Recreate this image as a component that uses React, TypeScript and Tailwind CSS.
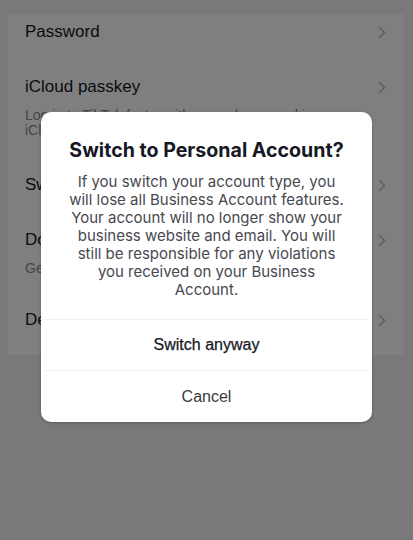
const rows = [
  { title: "Password", top: "mt-[14px]" },
  {
    title: "iCloud passkey",
    top: "mt-[19px]",
    sub: "Log in to TikTok faster with a passkey saved in your iCloud Keychain.",
  },
  { title: "Switch to Personal Account", top: "mt-[29px]" },
  { title: "Download your data", top: "mt-[19px]", sub: "Get a copy of your TikTok data" },
  { title: "Deactivate or delete account", top: "mt-[26px]" },
];

const Chevron = () => (
  <svg width="8" height="13" viewBox="0 0 8 13" fill="none" className="shrink-0">
    <path d="M1.5 1.5L6.5 6.5L1.5 11.5" stroke="#b4b4b4" strokeWidth="1.4" strokeLinecap="round" strokeLinejoin="round" />
  </svg>
);

export default function App() {
  return (
    <div
      className="relative w-[413px] h-[540px] overflow-hidden bg-[#f3f3f3]"
      style={{ fontFamily: '"Liberation Sans", Arial, sans-serif' }}
    >
      {/* Settings list behind the dialog */}
      <div className="mx-[8px] w-[396px] bg-white pb-[17px]">
        {rows.map((r) => (
          <div key={r.title} className={`${r.top} pl-[17px] pr-[18px]`}>
            <div className="flex h-[36px] items-center justify-between">
              <span className="text-[17px] text-[#161823]">{r.title}</span>
              <Chevron />
            </div>
            {r.sub && (
              <p className="mt-[3px] pr-[14px] text-[14px] leading-[15px] text-[#8a8b91]">{r.sub}</p>
            )}
          </div>
        ))}
      </div>

      {/* Dim */}
      <div className="absolute inset-0 bg-black/50" />

      {/* Dialog */}
      <div className="absolute left-[41px] top-[112px] w-[331px] rounded-[10px] bg-white shadow-[0_1px_3px_rgba(0,0,0,0.25)]">
        <div className="pt-[26px] pb-[20px] text-center" style={{ fontFamily: "Inter, sans-serif" }}>
          <h2 className="text-[19.6px] font-bold leading-[24px] text-[#161823]">Switch to Personal Account?</h2>
          <p className="mx-auto mt-[11px] w-[279px] text-[15px] leading-[18px] text-[#48484f]">
            If you switch your account type, you will lose all Business Account features. Your account will no
            longer show your business website and email. You will still be responsible for any violations you
            received on your Business Account.
          </p>
        </div>
        <div className="mx-[3px] h-px bg-[#efefef]" />
        <button className="flex h-[50px] w-full items-center justify-center text-[16px] text-[#161823] [-webkit-text-stroke:0.25px_#161823]">
          Switch anyway
        </button>
        <div className="mx-[3px] h-px bg-[#efefef]" />
        <button className="flex h-[51px] w-full items-center justify-center text-[16px] text-[#3a3a40]">
          Cancel
        </button>
      </div>
    </div>
  );
}
